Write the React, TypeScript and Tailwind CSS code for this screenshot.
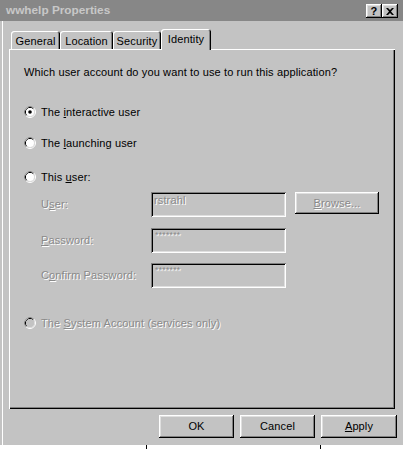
import React from "react"

const raised =
  "shadow-[inset_-1px_-1px_#000,inset_1px_1px_#fff,inset_-2px_-2px_#808080,inset_2px_2px_#dfdfdf]"
const sunken =
  "shadow-[inset_1px_1px_#808080,inset_-1px_-1px_#fff,inset_2px_2px_#000,inset_-2px_-2px_#dfdfdf]"
const disabledText = "text-[#8a8a8a] [text-shadow:1px_1px_0_#fff]"

function Radio({ checked, disabled }: { checked?: boolean; disabled?: boolean }) {
  return (
    <svg width="12" height="12" viewBox="0 0 12 12" className="shrink-0">
      <circle cx="6" cy="6" r="5.5" fill="none" stroke="#fff" />
      <path d="M2.11 9.89 A5.5 5.5 0 0 1 9.89 2.11" fill="none" stroke="#808080" />
      <circle cx="6" cy="6" r="4.5" fill="none" stroke="#dfdfdf" />
      <path d="M2.82 9.18 A4.5 4.5 0 0 1 9.18 2.82" fill="none" stroke="#000" />
      <circle cx="6" cy="6" r="4" fill={disabled ? "#c3c3c3" : "#fff"} />
      {checked && <circle cx="6" cy="6" r="1.8" fill="#000" />}
    </svg>
  )
}

function Tab({ label, w, active }: { label: string; w: string; active?: boolean }) {
  return (
    <div
      className={`${w} ${
        active ? "h-[21px] -mb-px z-10 pt-[2px]" : "h-[18px] pt-[2px]"
      } relative flex justify-center bg-[#c3c3c3] rounded-t-[3px] shadow-[inset_1px_1px_#fff,inset_-1px_0_#000,inset_-2px_0_#808080]`}
    >
      {label}
    </div>
  )
}

function Field({ label, value, small }: { label: React.ReactNode; value: string; small?: boolean }) {
  return (
    <>
      <span className={`${disabledText} leading-[13px]`}>{label}</span>
      <div className={`h-[25px] w-[135px] bg-[#c3c3c3] ${sunken} pl-[3px] pt-[2px] ${disabledText} ${small ? "text-[9px] leading-[10px] pl-[4px]" : "leading-[13px]"}`}>
        {value}
      </div>
    </>
  )
}

export default function App() {
  return (
    <div className="w-[403px] h-[449px] overflow-hidden bg-[#c3c3c3] text-[11px] tracking-[0.13px] text-black font-['Liberation_Sans',Arial,sans-serif] flex flex-col">
      {/* title bar */}
      <div className="h-[21px] shrink-0 bg-[#878787] flex items-center justify-between pl-[6px] pr-[5px]">
        <span className="font-bold text-[11.8px] text-[#c8c8c8] leading-none tracking-normal">wwhelp Properties</span>
        <div className="flex mt-[1px]">
          <div className={`w-[16px] h-[14px] bg-[#c3c3c3] ${raised} flex items-center justify-center font-bold text-[11px] leading-none`}>?</div>
          <div className={`w-[16px] h-[14px] bg-[#c3c3c3] ${raised} flex items-center justify-center`}>
            <svg width="8" height="7" viewBox="0 0 8 7">
              <path d="M0 0h2l2 2 2-2h2L5 3.5 8 7H6L4 5 2 7H0l3-3.5z" fill="#000" />
            </svg>
          </div>
        </div>
      </div>

      <div className="flex-1 ml-[2px] border-l border-white flex flex-col">
        {/* tabs */}
        <div className="mt-[8px] h-[20px] flex items-end pl-[8px]">
          <Tab label="General" w="w-[49px]" />
          <Tab label="Location" w="w-[53px]" />
          <Tab label="Security" w="w-[48px]" />
          <Tab label="Identity" w="w-[50px]" active />
        </div>

        {/* panel */}
        <div className="ml-[6px] w-[386px] h-[360px] shrink-0 shadow-[inset_1px_1px_#fff,inset_-1px_-1px_#000,inset_-2px_-2px_#808080] flex flex-col pl-[15px] pt-[17px]">
          <p className="leading-[13px]">Which user account do you want to use to run this application?</p>

          <label className="mt-[26px] flex items-center gap-[5px] h-[14px]">
            <Radio checked />
            <span>The <u>i</u>nteractive user</span>
          </label>
          <label className="mt-[17px] flex items-center gap-[5px] h-[14px]">
            <Radio />
            <span>The <u>l</u>aunching user</span>
          </label>
          <label className="mt-[20px] flex items-center gap-[5px] h-[14px]">
            <Radio />
            <span>This <u>u</u>ser:</span>
          </label>

          <div className="mt-[8px] ml-[17px] grid grid-cols-[101px_135px_84px] gap-x-[9px] items-center">
            <Field label={<>U<u>s</u>er:</>} value="rstrahl" />
            <button className={`h-[22px] self-start ${raised} ${disabledText}`}>
              <u>B</u>rowse...
            </button>
          </div>
          <div className="mt-[11px] ml-[17px] grid grid-cols-[101px_135px] gap-x-[9px] items-center">
            <Field label={<><u>P</u>assword:</>} value="*******" small />
          </div>
          <div className="mt-[10px] ml-[17px] grid grid-cols-[101px_135px] gap-x-[9px] items-center">
            <Field label={<>C<u>o</u>nfirm Password:</>} value="*******" small />
          </div>

          <label className="mt-[28px] flex items-center gap-[5px] h-[14px]">
            <Radio disabled />
            <span className={disabledText}>The <u>S</u>ystem Account (services only)</span>
          </label>
        </div>

        {/* buttons */}
        <div className="mt-[6px] flex justify-end gap-[6px] pr-[6px]">
          <button className={`w-[75px] h-[23px] ${raised}`}>OK</button>
          <button className={`w-[75px] h-[23px] ${raised}`}>Cancel</button>
          <button className={`w-[76px] h-[23px] ${raised}`}><u>A</u>pply</button>
        </div>
      </div>

      <div className="h-[4px] shrink-0 bg-white relative">
        <div className="absolute left-[146px] top-0 w-px h-[4px] bg-black" />
        <div className="absolute left-[320px] top-0 w-px h-[4px] bg-black" />
      </div>
    </div>
  )
}
